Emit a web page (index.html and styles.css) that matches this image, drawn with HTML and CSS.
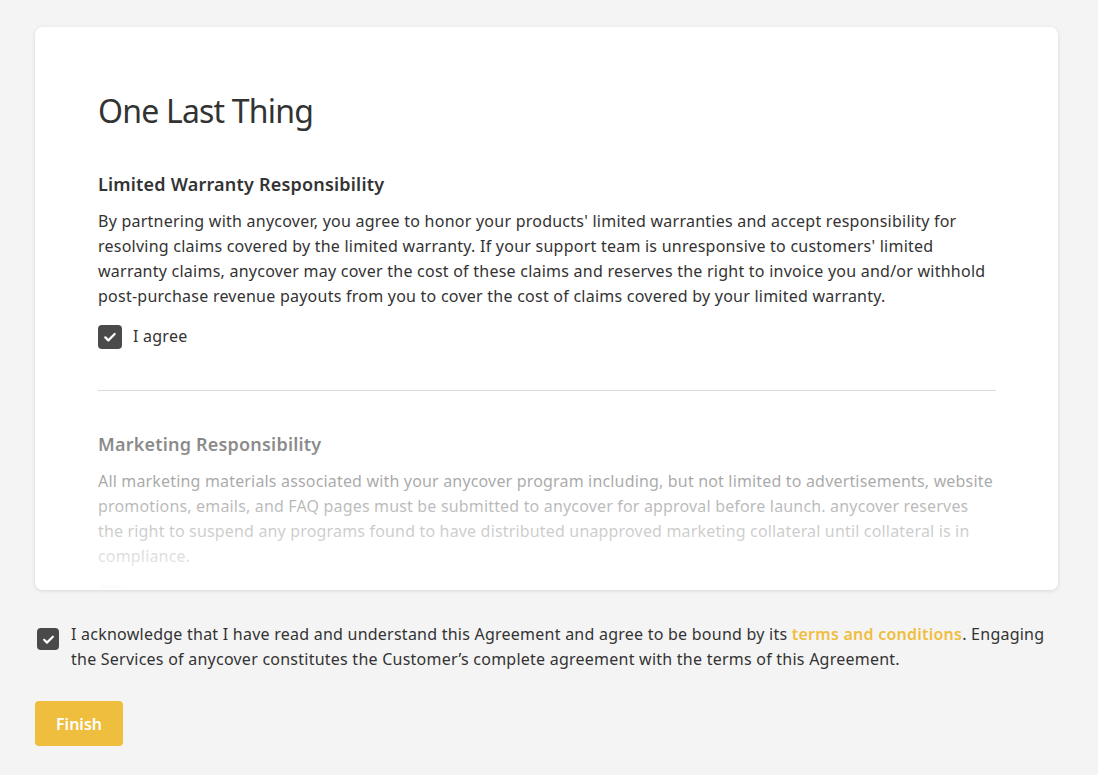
FILE: index.html
```html
<!DOCTYPE html>
<html lang="en">
<head>
<meta charset="utf-8">
<title>One Last Thing</title>
<link rel="stylesheet" href="styles.css">
</head>
<body>
<main class="page">
  <section class="card">
    <div class="card-body">
      <h1 class="title">One Last Thing</h1>

      <div class="term">
        <h2 class="term-title">Limited Warranty Responsibility</h2>
        <p class="term-text">By partnering with anycover, you agree to honor your products' limited warranties and accept responsibility for resolving claims covered by the limited warranty. If your support team is unresponsive to customers' limited warranty claims, anycover may cover the cost of these claims and reserves the right to invoice you and/or withhold post-purchase revenue payouts from you to cover the cost of claims covered by your limited warranty.</p>
        <label class="check-row">
          <span class="checkbox">
            <svg viewBox="0 0 24 24" width="16" height="16"><path d="M5 12.5l4.5 4.5L19 7.5" fill="none" stroke="#fff" stroke-width="3.4" stroke-linecap="round" stroke-linejoin="round"/></svg>
          </span>
          <span class="check-label">I agree</span>
        </label>
      </div>

      <hr class="divider">

      <div class="term">
        <h2 class="term-title">Marketing Responsibility</h2>
        <p class="term-text term-text--tight">All marketing materials associated with your anycover program including, but not limited to advertisements, website promotions, emails, and FAQ pages must be submitted to anycover for approval before launch. anycover reserves the right to suspend any programs found to have distributed unapproved marketing collateral until collateral is in compliance.</p>
        <label class="check-row">
          <span class="checkbox">
            <svg viewBox="0 0 24 24" width="16" height="16"><path d="M5 12.5l4.5 4.5L19 7.5" fill="none" stroke="#fff" stroke-width="3.4" stroke-linecap="round" stroke-linejoin="round"/></svg>
          </span>
          <span class="check-label">I agree</span>
        </label>
      </div>
    </div>
    <div class="fade"></div>
  </section>

  <div class="ack">
    <span class="checkbox small">
      <svg viewBox="0 0 24 24" width="15" height="15"><path d="M5 12.5l4.5 4.5L19 7.5" fill="none" stroke="#fff" stroke-width="3.4" stroke-linecap="round" stroke-linejoin="round"/></svg>
    </span>
    <p class="ack-text">I acknowledge that I have read and understand this Agreement and agree to be bound by its <a class="link" href="#">terms and conditions</a>. Engaging the Services of anycover constitutes the Customer’s complete agreement with the terms of this Agreement.</p>
  </div>

  <button class="finish" type="button">Finish</button>
</main>
</body>
</html>
```

FILE: styles.css
```css
* { box-sizing: border-box; }

html, body {
  margin: 0;
  padding: 0;
}

body {
  background: #f4f4f4;
  font-family: "Noto Sans", "Open Sans", sans-serif;
  color: #333;
}

.page {
  padding: 27px 40px 28px 35px;
}

.card {
  position: relative;
  background: #fff;
  border-radius: 8px;
  box-shadow: 0 1px 4px rgba(0, 0, 0, 0.12);
  height: 563px;
  overflow: hidden;
}

.card-body {
  padding: 60px 62px 0 63px;
}

.title {
  margin: 0 0 36px;
  font-size: 32px;
  font-weight: 400;
  line-height: 48px;
  letter-spacing: -0.8px;
  color: #333;
}

.term-title {
  margin: 0 0 12px;
  font-size: 18px;
  font-weight: 600;
  line-height: 26px;
  letter-spacing: 0.2px;
  color: #333;
}

.term-text {
  margin: 0 0 15px;
  font-size: 16px;
  line-height: 25px;
  letter-spacing: 0.24px;
}

.term-text--tight {
  letter-spacing: 0.17px;
}

.check-row {
  display: flex;
  align-items: center;
  gap: 11px;
}

.checkbox {
  display: inline-flex;
  align-items: center;
  justify-content: center;
  width: 24px;
  height: 24px;
  border-radius: 4px;
  background: #4a4a4a;
  flex: none;
}

.checkbox.small {
  width: 22px;
  height: 22px;
}

.check-label {
  font-size: 16px;
  line-height: 25px;
  letter-spacing: 0.24px;
}

.divider {
  border: 0;
  border-top: 1px solid #d4d4d4;
  margin: 41px 0 40px;
}

.fade {
  position: absolute;
  left: 0;
  right: 0;
  bottom: 0;
  height: 230px;
  background: linear-gradient(to bottom,
    rgba(255,255,255,0) 0%,
    rgba(255,255,255,0.12) 13%,
    rgba(255,255,255,0.43) 37%,
    rgba(255,255,255,0.58) 53%,
    rgba(255,255,255,0.84) 86%,
    #fff 100%);
  pointer-events: none;
}

.ack {
  display: flex;
  align-items: flex-start;
  gap: 12px;
  margin: 32px 0 0 2px;
}

.ack .checkbox.small {
  margin-top: 6px;
}

.ack-text {
  margin: 0;
  font-size: 16px;
  line-height: 25px;
  letter-spacing: 0.24px;
  color: #333;
}

.link {
  color: #efbe3f;
  font-weight: 600;
  text-decoration: none;
}

.finish {
  margin-top: 29px;
  width: 88px;
  height: 45px;
  border: 0;
  border-radius: 4px;
  background: #efbe3f;
  color: #fff;
  font-family: inherit;
  font-size: 16px;
  font-weight: 600;
  cursor: pointer;
}
```
